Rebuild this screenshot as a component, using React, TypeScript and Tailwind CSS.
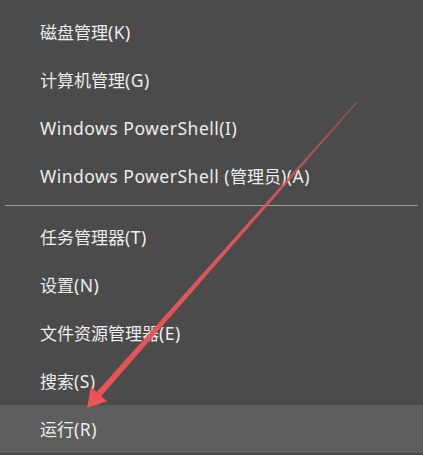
type Item = { label: string; active?: boolean };

const topItems: Item[] = [
  { label: "磁盘管理(K)" },
  { label: "计算机管理(G)" },
  { label: "Windows PowerShell(I)" },
  { label: "Windows PowerShell (管理员)(A)" },
];

const bottomItems: Item[] = [
  { label: "任务管理器(T)" },
  { label: "设置(N)" },
  { label: "文件资源管理器(E)" },
  { label: "搜索(S)" },
  { label: "运行(R)", active: true },
];

// CJK runs and latin runs get slightly different sizing to match the original menu font
function Label({ text }: { text: string }) {
  const parts = text.split(/([\u4e00-\u9fff]+)/).filter((p) => p !== "");
  return (
    <span className="whitespace-pre">
      {parts.map((p, i) =>
        /[\u4e00-\u9fff]/.test(p) ? (
          <span key={i} className="text-[17px]">
            {p}
          </span>
        ) : (
          <span key={i} className="text-[17.5px] tracking-[0.5px]">
            {p}
          </span>
        )
      )}
    </span>
  );
}

function MenuRow({ item }: { item: Item }) {
  return (
    <div
      className={`flex h-12 items-center pl-10 text-[#ededed] ${
        item.active ? "bg-[#5d5d5d]" : ""
      }`}
    >
      <Label text={item.label} />
    </div>
  );
}

function Arrow() {
  return (
    <svg
      className="pointer-events-none absolute left-0 top-0"
      width={423}
      height={455}
      viewBox="0 0 423 455"
    >
      <defs>
        <linearGradient id="shaft" x1="357" y1="102" x2="99" y2="394" gradientUnits="userSpaceOnUse">
          <stop offset="0" stopColor="#c9525a" stopOpacity="0.55" />
          <stop offset="0.35" stopColor="#e0565c" stopOpacity="0.9" />
          <stop offset="1" stopColor="#ec5457" />
        </linearGradient>
      </defs>
      <polygon points="357.5,102.5 356.5,101.6 96.75,392 101.25,396" fill="url(#shaft)" />
      <polygon points="87,408 90.8,386.7 107.2,401.3" fill="#ec5457" />
    </svg>
  );
}

export default function App() {
  return (
    <div
      className="relative h-[455px] w-[423px] overflow-hidden bg-[#4b4b4b]"
      style={{ fontFamily: '"Noto Sans", "Noto Sans CJK SC", sans-serif' }}
    >
      <div className="flex flex-col pt-2">
        {topItems.map((item) => (
          <MenuRow key={item.label} item={item} />
        ))}
        <div className="mx-[5px] mb-[7px] mt-[5px] h-px bg-[#9c9c9c]" />
        {bottomItems.map((item) => (
          <MenuRow key={item.label} item={item} />
        ))}
      </div>
      <Arrow />
    </div>
  );
}
